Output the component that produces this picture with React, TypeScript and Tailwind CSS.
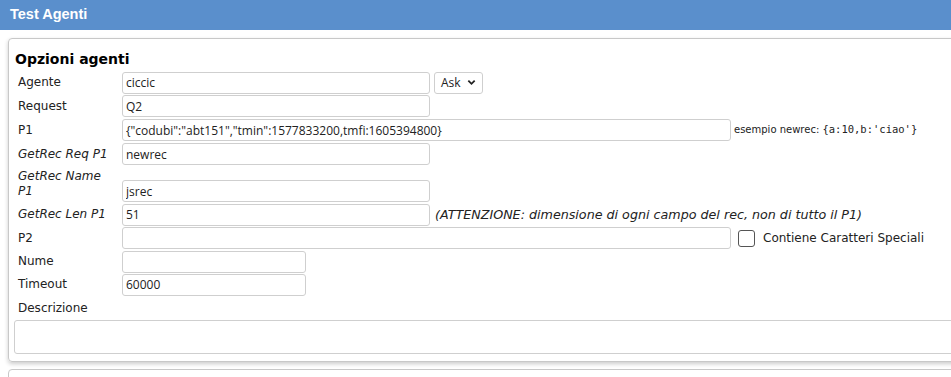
import React from 'react';

const label = "text-[12px] text-[#222] leading-[15px] pl-[4px] w-[108px] shrink-0";
const input = "h-[22px] border border-[#cfcfcf] rounded-[3px] bg-white px-[3px] text-[12px] text-[#222] font-['Open_Sans',sans-serif] outline-none";

const Row = ({ children, className = '' }: { children: React.ReactNode; className?: string }) => (
    <div className={`flex items-center ${className}`}>{children}</div>
);

export default function App() {
    return (
        <div className="w-[951px] h-[377px] overflow-hidden bg-white font-['DejaVu_Sans',sans-serif]">
            {/* header */}
            <div className="h-[30px] bg-[#5a8fcc] flex items-center pl-[10px]">
                <span className="text-white font-bold text-[14.5px] font-['Liberation_Sans',Arial,sans-serif]">Test Agenti</span>
            </div>

            {/* panel */}
            <div className="mt-[8px] ml-[8px] w-[960px] border border-[#c8c8c8] rounded-[4px] shadow-[0_2px_4px_rgba(0,0,0,0.2)] pl-[5px] pt-[11px] pb-[7px]">
                <h2 className="text-[14px] font-bold text-black leading-[18px] pl-[1px]">Opzioni agenti</h2>
                <div className="mt-[3px] flex flex-col">
                    <Row className="h-[23px]">
                        <span className={label}>Agente</span>
                        <input className={`${input} w-[308px]`} defaultValue="ciccic" />
                        <div className="ml-[4px] h-[22px] w-[49px] border border-[#cfcfcf] rounded-[3px] flex items-center justify-between px-[6px] text-[12px] font-['Open_Sans',sans-serif] text-[#222]">
                            Ask
                            <svg width="9" height="9" viewBox="0 0 10 10"><path d="M1.5 3 L5 6.5 L8.5 3" stroke="#222" strokeWidth="2" fill="none" /></svg>
                        </div>
                    </Row>
                    <Row className="h-[24px]">
                        <span className={label}>Request</span>
                        <input className={`${input} w-[308px]`} defaultValue="Q2" />
                    </Row>
                    <Row className="h-[24px]">
                        <span className={label}>P1</span>
                        <input className={`${input} w-[609px]`} defaultValue={'{"codubi":"abt151","tmin":1577833200,tmfi:1605394800}'} />
                        <span className="ml-[3px] text-[10px] text-[#222]">esempio newrec: <span className="font-['DejaVu_Sans_Mono',monospace] text-[10.5px]">{"{a:10,b:'ciao'}"}</span></span>
                    </Row>
                    <Row className="h-[24px]">
                        <span className={`${label} italic`}>GetRec Req P1</span>
                        <input className={`${input} w-[308px]`} defaultValue="newrec" />
                    </Row>
                    <div className="flex h-[37px]">
                        <span className={`${label} italic pt-[3px] pr-[12px]`}>GetRec Name P1</span>
                        <div className="flex items-end pb-[1px]">
                            <input className={`${input} w-[308px]`} defaultValue="jsrec" />
                        </div>
                    </div>
                    <Row className="h-[23px]">
                        <span className={`${label} italic`}>GetRec Len P1</span>
                        <input className={`${input} w-[308px]`} defaultValue="51" />
                        <span className="ml-[5px] text-[12.7px] italic text-[#222]">(ATTENZIONE: dimensione di ogni campo del rec, non di tutto il P1)</span>
                    </Row>
                    <Row className="h-[24px]">
                        <span className={label}>P2</span>
                        <input className={`${input} w-[609px]`} />
                        <span className="ml-[7px] w-[17px] h-[17px] border border-[#555] rounded-[3px] bg-white" />
                        <span className="ml-[8px] text-[12px] text-[#222]">Contiene Caratteri Speciali</span>
                    </Row>
                    <Row className="h-[23px]">
                        <span className={label}>Nume</span>
                        <input className={`${input} w-[184px]`} />
                    </Row>
                    <Row className="h-[23px]">
                        <span className={label}>Timeout</span>
                        <input className={`${input} w-[184px]`} defaultValue="60000" />
                    </Row>
                    <div className="mt-[5px] pl-[4px] text-[12px] text-[#222] leading-[15px]">Descrizione</div>
                    <textarea className="mt-[4px] w-[950px] h-[34px] border border-[#cfcfcf] rounded-[3px] resize-none outline-none" />
                </div>
            </div>
            <div className="mt-[7px] ml-[8px] w-[960px] h-[40px] border border-[#c8c8c8] rounded-[4px]" />
        </div>
    );
}
